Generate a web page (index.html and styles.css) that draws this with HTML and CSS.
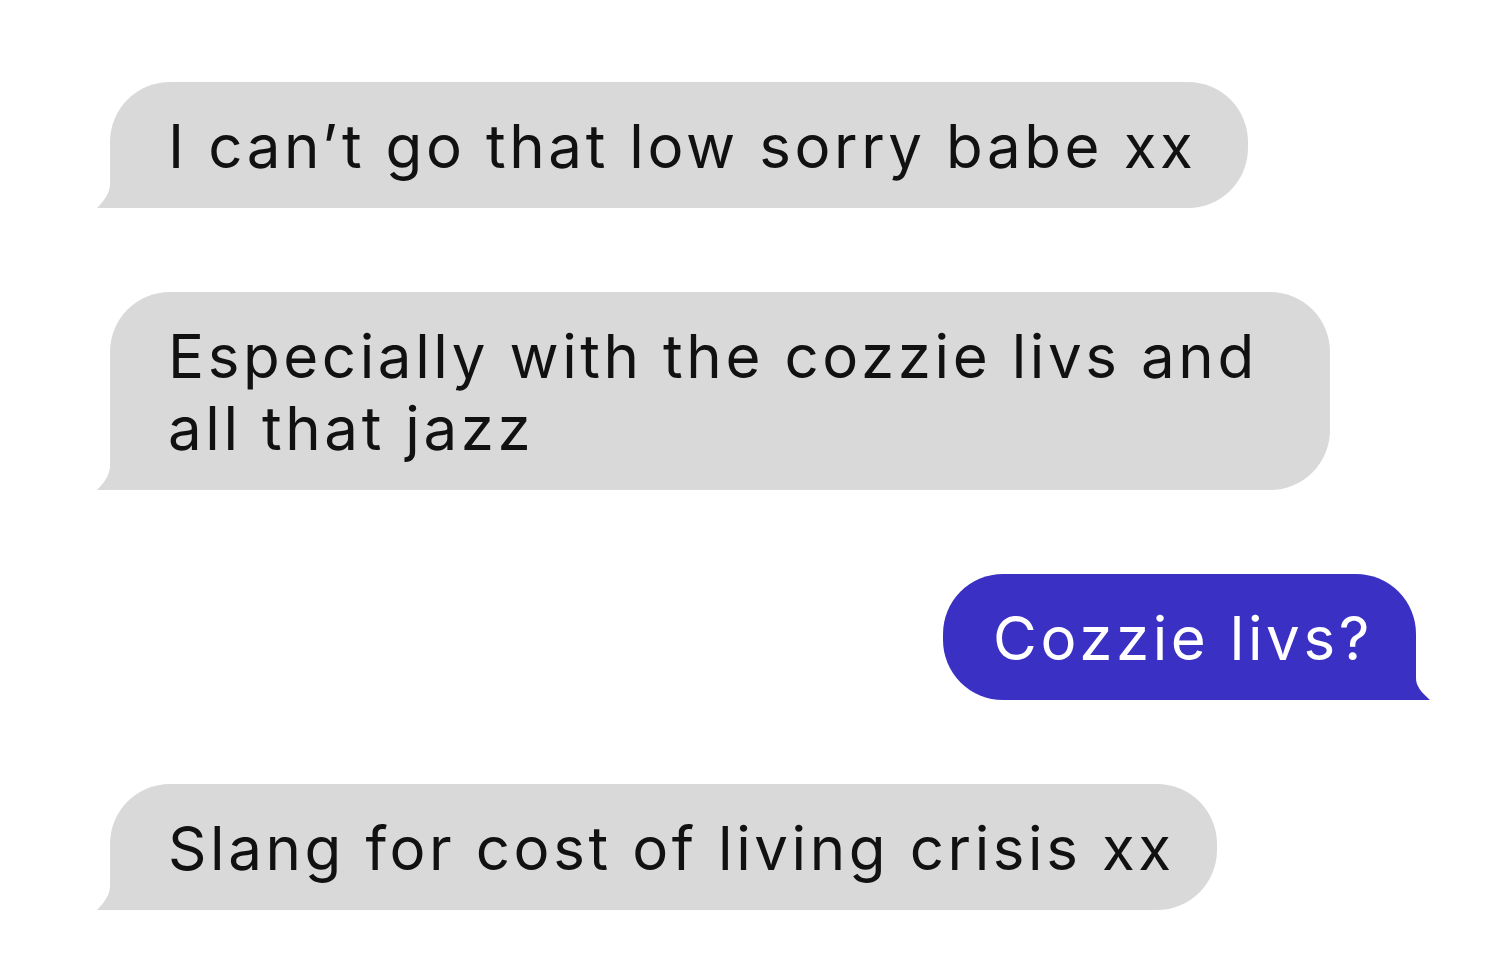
FILE: index.html
```html
<!DOCTYPE html>
<html lang="en">
<head>
<meta charset="utf-8">
<title>Cozzie livs</title>
<link rel="stylesheet" href="styles.css">
</head>
<body>
<main class="chat">
  <div class="row in">
    <div class="bubble gray"><span class="txt">I can’t go that low sorry babe xx</span></div>
  </div>
  <div class="row in">
    <div class="bubble gray wide"><span class="txt">Especially with the cozzie livs and<br>all that jazz</span></div>
  </div>
  <div class="row out">
    <div class="bubble blue"><span class="txt">Cozzie livs?</span></div>
  </div>
  <div class="row in">
    <div class="bubble gray tight"><span class="txt">Slang for cost of living crisis xx</span></div>
  </div>
</main>
</body>
</html>
```
FILE: styles.css
```css
html, body {
  margin: 0;
  padding: 0;
  background: #ffffff;
}
.chat {
  width: 1500px;
  height: 980px;
  box-sizing: border-box;
  padding: 82px 84px 0 110px;
  display: flex;
  flex-direction: column;
  gap: 84px;
  font-family: Inter, "Liberation Sans", Arial, sans-serif;
}
.row {
  display: flex;
}
.row.in { justify-content: flex-start; }
.row.out { justify-content: flex-end; }
.bubble {
  position: relative;
  border-radius: 60px;
  padding: 2px 52px 0 58px;
  font-size: 60px;
  letter-spacing: 3.6px;
  line-height: 72px;
  display: flex;
  align-items: center;
  min-height: 126px;
  box-sizing: border-box;
}
.bubble.wide {
  min-height: 198px;
  padding-top: 10px;
  padding-bottom: 8px;
  padding-right: 72px;
}
.bubble.tight {
  padding-right: 42px;
}
.gray {
  background: #d9d9d9;
  color: #111111;
  border-bottom-left-radius: 0;
}
.gray::before {
  content: "";
  position: absolute;
  left: -13px;
  bottom: 0;
  width: 30px;
  height: 24px;
  background: #d9d9d9;
  clip-path: path('M13 0 C13 8 8 16 0 24 L30 24 L30 0 Z');
}
.blue {
  background: #3a30c4;
  color: #ffffff;
  border-bottom-right-radius: 0;
  padding: 2px 43px 0 50px;
}
.blue::after {
  content: "";
  position: absolute;
  right: -14px;
  bottom: 0;
  width: 30px;
  height: 22px;
  background: #3a30c4;
  clip-path: path('M16 0 C16 8 21 14 30 22 L0 22 L0 0 Z');
}
.txt {
  display: block;
  white-space: nowrap;
}
```
